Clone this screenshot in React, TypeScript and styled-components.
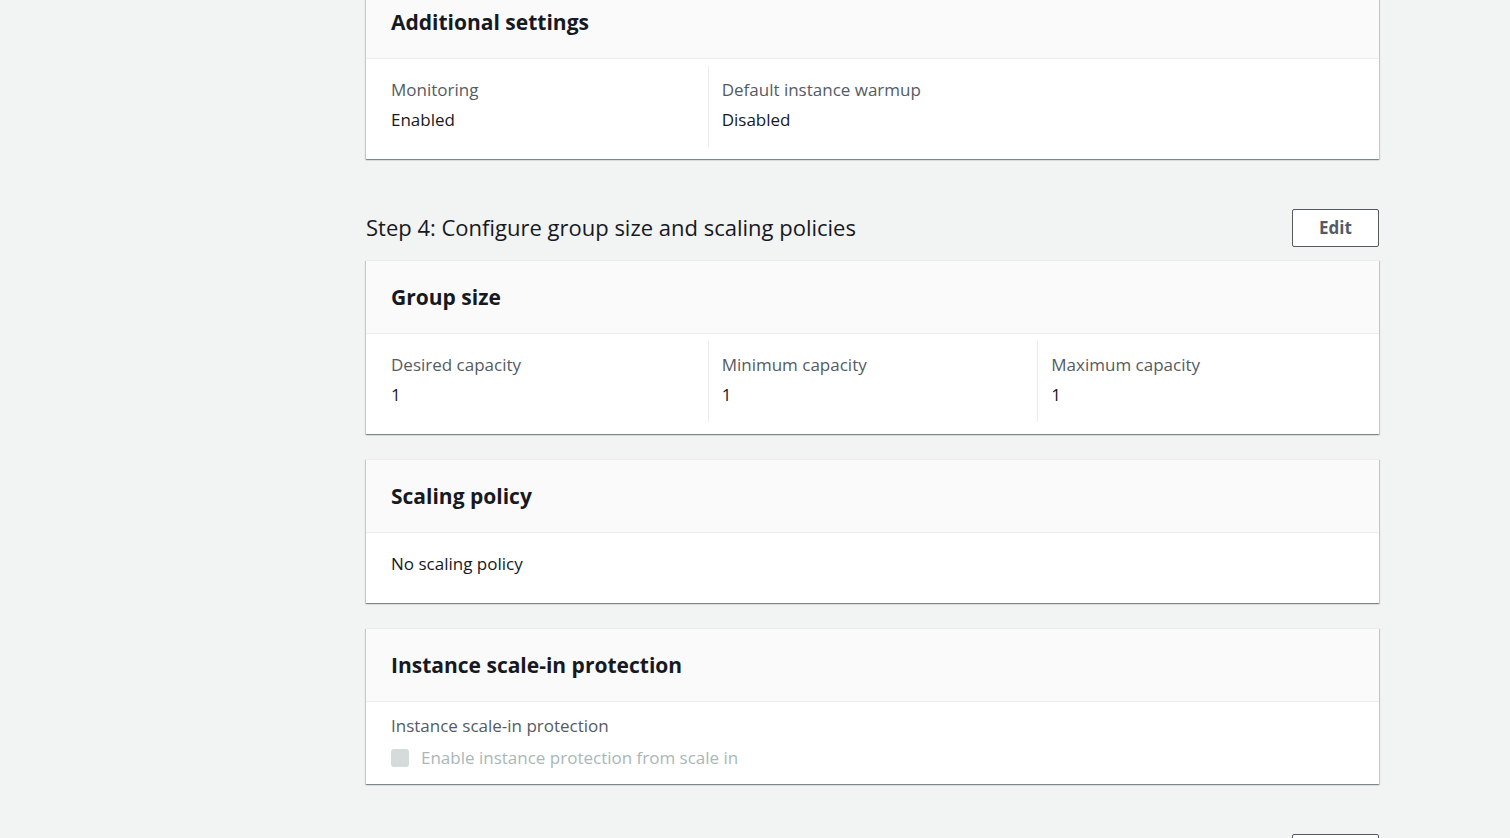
import React from "react";
import styled, { createGlobalStyle } from "styled-components";

const Global = createGlobalStyle`
  html, body { margin: 0; padding: 0; background: #f2f3f3; }
  body { font-family: "Open Sans", "Noto Sans", Arial, sans-serif; color: #16191f; overflow: hidden; }
  * { box-sizing: border-box; }
`;

const Page = styled.div`
  width: 1510px;
  height: 838px;
  overflow: hidden;
  padding-left: 366px;
`;

const Content = styled.div`
  width: 1013px;
  margin-top: -15px;
  display: flex;
  flex-direction: column;
`;

const Card = styled.section<{ $gap?: number }>`
  background: #fff;
  margin-top: ${(p) => p.$gap ?? 0}px;
  box-shadow: 0 1px 1px 0 rgba(0, 28, 36, 0.3), 1px 1px 1px 0 rgba(0, 28, 36, 0.15),
    -1px 1px 1px 0 rgba(0, 28, 36, 0.15);
  border-top: 1px solid #eaeded;
`;

const CardHeader = styled.header`
  height: 73px;
  display: flex;
  align-items: center;
  background: #fafafa;
  border-bottom: 1px solid #eaeded;
  padding: 0 25px 1px;
`;

const CardTitle = styled.h2`
  margin: 0;
  font-size: 21px;
  line-height: 32px;
  font-weight: 700;
  color: #16191f;
`;

const Columns = styled.div`
  display: grid;
  grid-template-columns: repeat(3, 1fr);
  padding: 7px 12px 12px;
`;

const Column = styled.div<{ $first?: boolean }>`
  padding: 13px 0 16px 13px;
  border-left: ${(p) => (p.$first ? "none" : "1px solid #eaeded")};
`;

const Label = styled.div`
  font-size: 17px;
  line-height: 22px;
  color: #545b64;
`;

const Value = styled.div`
  margin-top: 8px;
  font-size: 17px;
  line-height: 22px;
  color: #16191f;
`;

const PlainBody = styled.div<{ $pt: number; $pb: number }>`
  padding: ${(p) => p.$pt}px 25px ${(p) => p.$pb}px;
`;

const Text = styled.div`
  font-size: 17px;
  line-height: 22px;
  color: #16191f;
`;

const StepRow = styled.div`
  margin-top: 50px;
  margin-bottom: 13px;
  display: flex;
  align-items: center;
  justify-content: space-between;
`;

const StepTitle = styled.h2`
  margin: 0;
  padding-bottom: 2px;
  font-size: 22px;
  line-height: 28px;
  font-weight: 400;
  color: #16191f;
`;

const EditButton = styled.button`
  width: 87px;
  height: 38px;
  border: 1px solid #545b64;
  border-radius: 2px;
  background: #fff;
  color: #545b64;
  font-family: inherit;
  font-size: 17px;
  font-weight: 700;
  padding: 0 0 2px;
`;

const CheckRow = styled.div`
  margin-top: 10px;
  display: flex;
  align-items: center;
  gap: 12px;
`;

const Checkbox = styled.span`
  width: 18px;
  height: 18px;
  border-radius: 3px;
  background: #d5dbdb;
  display: inline-block;
`;

const DisabledText = styled.span`
  font-size: 17px;
  line-height: 22px;
  color: #aab7b8;
`;

type Item = { label: string; value: string };

const KeyValues = ({ items }: { items: Item[] }) => (
  <Columns>
    {items.map((it, i) => (
      <Column key={it.label} $first={i === 0}>
        <Label>{it.label}</Label>
        <Value>{it.value}</Value>
      </Column>
    ))}
  </Columns>
);

export default function App() {
  return (
    <>
      <Global />
      <Page>
        <Content>
          <Card>
            <CardHeader>
              <CardTitle>Additional settings</CardTitle>
            </CardHeader>
            <KeyValues
              items={[
                { label: "Monitoring", value: "Enabled" },
                { label: "Default instance warmup", value: "Disabled" },
              ]}
            />
          </Card>

          <StepRow>
            <StepTitle>Step 4: Configure group size and scaling policies</StepTitle>
            <EditButton>Edit</EditButton>
          </StepRow>

          <Card>
            <CardHeader>
              <CardTitle>Group size</CardTitle>
            </CardHeader>
            <KeyValues
              items={[
                { label: "Desired capacity", value: "1" },
                { label: "Minimum capacity", value: "1" },
                { label: "Maximum capacity", value: "1" },
              ]}
            />
          </Card>

          <Card $gap={25}>
            <CardHeader>
              <CardTitle>Scaling policy</CardTitle>
            </CardHeader>
            <PlainBody $pt={20} $pb={28}>
              <Text>No scaling policy</Text>
            </PlainBody>
          </Card>

          <Card $gap={25}>
            <CardHeader>
              <CardTitle>Instance scale-in protection</CardTitle>
            </CardHeader>
            <PlainBody $pt={13} $pb={15}>
              <Label>Instance scale-in protection</Label>
              <CheckRow>
                <Checkbox />
                <DisabledText>Enable instance protection from scale in</DisabledText>
              </CheckRow>
            </PlainBody>
          </Card>

          <StepRow>
            <StepTitle>Step 5: Add notifications</StepTitle>
            <EditButton>Edit</EditButton>
          </StepRow>
        </Content>
      </Page>
    </>
  );
}
